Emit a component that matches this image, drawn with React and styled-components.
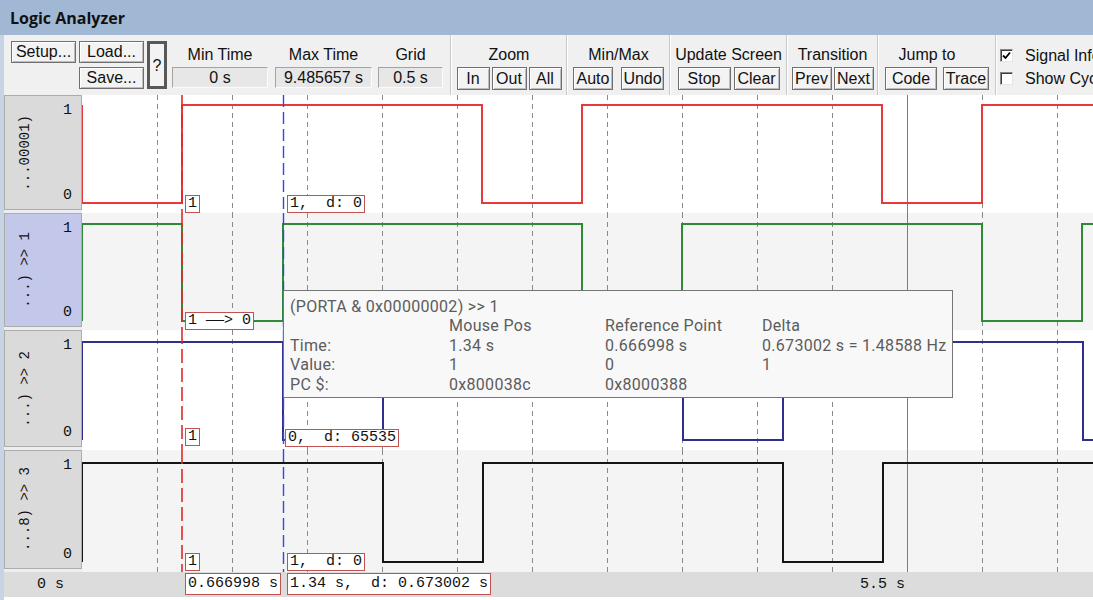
import React from "react";
import styled, { createGlobalStyle } from "styled-components";

const MONO = `"Liberation Mono", "DejaVu Sans Mono", monospace`;
const UI = `"Liberation Sans", Arial, sans-serif`;
const SOFT = `"Open Sans", "Noto Sans", sans-serif`;
const TIP = `Roboto, "Liberation Sans", sans-serif`;

const GlobalStyle = createGlobalStyle`
  html, body { margin: 0; padding: 0; background: #fff; overflow: hidden; }
  #root { width: 1093px; height: 600px; overflow: hidden; }
`;

const Window = styled.div`
  width: 1093px;
  height: 600px;
  display: flex;
  flex-direction: column;
  overflow: hidden;
  background: #fff;
`;

const TitleBar = styled.div`
  height: 35px;
  flex: none;
  background: #a1b8d4;
  display: flex;
  align-items: center;
  padding-left: 10px;
  font-family: ${SOFT};
  font-weight: 700;
  font-size: 16px;
  color: #111;
`;

const Body = styled.div`
  flex: 1;
  min-height: 0;
  display: flex;
  flex-direction: column;
  border-left: 4px solid #c7d4e5;
`;

const Toolbar = styled.div`
  height: 60px;
  flex: none;
  display: flex;
  align-items: stretch;
  background: #f0f0f0;
  padding-left: 7px;
  font-family: ${UI};
  font-size: 16px;
  color: #111;
  white-space: nowrap;
`;

const FileGrid = styled.div`
  display: grid;
  grid-template-columns: 65px 65px 20px;
  grid-template-rows: 22px 22px;
  column-gap: 3px;
  row-gap: 4px;
  padding-top: 6px;
`;

const Btn = styled.div`
  box-sizing: border-box;
  width: ${(p) => (p.$w ? `${p.$w}px` : "auto")};
  height: ${(p) => (p.$h ? `${p.$h}px` : "23px")};
  grid-column: ${(p) => p.$col || "auto"};
  grid-row: ${(p) => p.$row || "auto"};
  border: 1px solid #6f6f6f;
  box-shadow: inset 1px 1px 0 #fff, inset -1px -1px 0 #bdbdbd;
  background: #f3f3f3;
  display: flex;
  align-items: center;
  justify-content: center;
  font-family: ${UI};
  font-size: 16px;
  color: #111;
`;

const HelpBtn = styled(Btn)`
  height: auto;
  border: 3px solid #585858;
  box-shadow: none;
  padding-top: 2px;
`;

const Group = styled.div`
  width: ${(p) => p.$w}px;
  margin-left: ${(p) => p.$ml || 0}px;
  flex: none;
  display: flex;
  flex-direction: column;
  align-items: center;
  padding-top: 9px;
  gap: 1px;
`;

const GroupLabel = styled.div`
  height: 22px;
  line-height: 22px;
  text-align: center;
  padding-right: ${(p) => p.$shift || 0}px;
`;

const FieldBox = styled.div`
  width: 100%;
  height: 21px;
  box-sizing: border-box;
  background: #e7e7e7;
  border: 1px solid;
  border-color: #a3a3a3 #fbfbfb #fbfbfb #a3a3a3;
  display: flex;
  align-items: center;
  justify-content: center;
`;

const BtnRow = styled.div`
  display: flex;
  gap: ${(p) => p.$gap || 2}px;
  justify-content: center;
`;

const Sep = styled.div`
  width: 2px;
  flex: none;
  margin-left: ${(p) => p.$ml || 0}px;
  background: linear-gradient(to right, #c8c8c8 1px, #ffffff 1px);
`;

const Checks = styled.div`
  display: flex;
  flex-direction: column;
  gap: 10px;
  padding: 14px 0 0 3px;
`;

const CheckRow = styled.label`
  display: flex;
  align-items: center;
  gap: 12px;
  height: 13px;
`;

const CheckBox = styled.span`
  width: 13px;
  height: 13px;
  box-sizing: border-box;
  flex: none;
  background: #fff;
  border: 1px solid;
  border-color: #858585 #e4e4e4 #e4e4e4 #858585;
  box-shadow: inset 1px 1px 0 #3e3e3e;
  display: flex;
  align-items: center;
  justify-content: center;
`;

const Tracks = styled.div`
  position: relative;
  display: flex;
  flex-direction: column;
  flex: none;
`;

const Row = styled.div`
  display: flex;
  height: ${(p) => p.$h}px;
`;

const LabelCell = styled.div`
  width: 78px;
  flex: none;
  box-sizing: border-box;
  display: flex;
  background: ${(p) => (p.$sel ? "#c3c7e9" : "#dadada")};
  border-bottom: 3px solid #eceef1;
  box-shadow: inset 0 0 0 1px #acacac;
  font-family: ${MONO};
  color: #111;
`;

const SignalName = styled.div`
  writing-mode: vertical-rl;
  transform: rotate(180deg);
  align-self: center;
  margin-left: 13px;
  font-size: 14px;
  line-height: 16px;
  white-space: pre;
`;

const Levels = styled.div`
  margin-left: auto;
  padding: 8px 10px 6px 0;
  display: flex;
  flex-direction: column;
  justify-content: space-between;
  font-size: 15px;
  line-height: 16px;
`;

const Trace = styled.div`
  flex: 1;
  position: relative;
  background: ${(p) => (p.$alt ? "#f4f4f4" : "#ffffff")};
`;

const Plot = styled.svg`
  display: block;
  width: 100%;
  height: 100%;
`;

const Marker = styled.div`
  position: absolute;
  left: ${(p) => p.$x}px;
  bottom: ${(p) => p.$b || 0}px;
  height: 18px;
  box-sizing: border-box;
  padding: 0 2px;
  background: #fff;
  border: 1px solid #c2524f;
  font-family: ${MONO};
  font-size: 15px;
  line-height: 16px;
  color: #111;
  white-space: pre;
`;

const LongDash = styled.span`
  display: inline-block;
  width: 2ch;
  transform: scaleX(2);
  transform-origin: left center;
`;

const AxisRow = styled.div`
  height: 25px;
  flex: none;
  display: flex;
  background: #dcdcdc;
  font-family: ${MONO};
  font-size: 15px;
  color: #111;
`;

const AxisStart = styled.div`
  width: 78px;
  flex: none;
  box-sizing: border-box;
  padding-left: 33px;
  line-height: 25px;
  white-space: pre;
`;

const AxisTrack = styled.div`
  flex: 1;
  position: relative;
`;

const AxisBox = styled.div`
  position: absolute;
  left: ${(p) => p.$x}px;
  top: 1px;
  height: 22px;
  box-sizing: border-box;
  padding: 0 2px;
  background: #fff;
  border: 1px solid #c2524f;
  line-height: 20px;
  white-space: pre;
`;

const AxisTick = styled.div`
  position: absolute;
  right: ${(p) => p.$r}px;
  top: 0;
  line-height: 25px;
  white-space: pre;
`;

const Tooltip = styled.div`
  position: absolute;
  left: 279px;
  top: 195px;
  width: 670px;
  height: 108px;
  box-sizing: border-box;
  background: #f8f8f8;
  border: 1px solid #767676;
  padding: 6px 0 0 6px;
  display: grid;
  grid-template-columns: 159px 156px 157px 1fr;
  grid-auto-rows: 19.4px;
  font-family: ${TIP};
  font-size: 16px;
  letter-spacing: 0.3px;
  line-height: 19.4px;
  color: #5c5c5c;
  white-space: nowrap;
`;

const TipTitle = styled.div`
  grid-column: 1 / -1;
`;

const PX = 150; // pixels per second
const W = 1011;
const RED_T = 0.666998;
const BLUE_T = 1.34;
const redX = Math.round(RED_T * PX);
const blueX = Math.round(BLUE_T * PX);

const ROWS = [
  {
    name: "...00001)",
    h: 118,
    color: "#e5393b",
    d: "M0,10 V108 H100 V10 H400 V108 H500 V10 H800 V108 H900 V10 H1011",
    markers: [
      { x: redX + 3, text: "1", b: 0 },
      { x: blueX + 4, text: "1,  d: 0", b: 0 },
    ],
  },
  {
    name: "...) >> 1",
    h: 117,
    alt: true,
    sel: true,
    color: "#2f8c35",
    d: "M0,108 V11 H100 V108 H201 V11 H500 V108 H600 V11 H900 V108 H1000 V11 H1011",
    markers: [
      {
        x: redX + 3,
        text: (
          <>
            1 <LongDash>—</LongDash>&gt; 0
          </>
        ),
        b: 0,
      },
    ],
  },
  {
    name: "...) >> 2",
    h: 120,
    color: "#302f8e",
    d: "M0,110 V12 H201 V110 H301 V12 H601 V110 H701 V12 H1001 V110 H1011",
    markers: [
      { x: redX + 3, text: "1", b: 4 },
      { x: blueX + 2, text: "0,  d: 65535", b: 3 },
    ],
  },
  {
    name: "...8) >> 3",
    h: 122,
    alt: true,
    color: "#151515",
    d: "M0,112 V13 H301 V112 H401 V13 H701 V112 H801 V13 H1011",
    markers: [
      { x: redX + 3, text: "1", b: 1 },
      { x: blueX + 4, text: "1,  d: 0", b: 1 },
    ],
  },
];

function TracePlot({ h, color, d }) {
  const grid = [];
  for (let k = 1; k <= 13; k++) {
    const x = k * 75 + 0.5;
    if (k === 11) {
      grid.push(<line key={k} x1={x} y1={0} x2={x} y2={h} stroke="#7d7d7d" strokeWidth="1" />);
    } else {
      grid.push(
        <line key={k} x1={x} y1={0} x2={x} y2={h} stroke="#8a8a8a" strokeWidth="1" strokeDasharray="5 4" />
      );
    }
  }
  return (
    <Plot viewBox={`0 0 ${W} ${h}`} preserveAspectRatio="none">
      {grid}
      <path d={d} fill="none" stroke={color} strokeWidth="2" shapeRendering="crispEdges" />
      <line x1={redX} y1={0} x2={redX} y2={h} stroke="#e12a2a" strokeWidth="1.6" strokeDasharray="14 5" />
      <line x1={blueX + 0.5} y1={0} x2={blueX + 0.5} y2={h} stroke="#3347e6" strokeWidth="1.4" strokeDasharray="12 5" />
    </Plot>
  );
}

function Check({ checked, children }) {
  return (
    <CheckRow>
      <CheckBox>
        {checked && (
          <svg width="9" height="9" viewBox="0 0 9 9">
            <path d="M1 4.5 L3.5 7 L8 1.5" fill="none" stroke="#000" strokeWidth="1.8" />
          </svg>
        )}
      </CheckBox>
      {children}
    </CheckRow>
  );
}

export default function App() {
  return (
    <>
      <GlobalStyle />
      <Window>
        <TitleBar>Logic Analyzer</TitleBar>
        <Body>
          <Toolbar>
            <FileGrid>
              <Btn $col="1" $row="1" $h={22}>Setup...</Btn>
              <Btn $col="2" $row="1" $h={22}>Load...</Btn>
              <Btn $col="2" $row="2" $h={22}>Save...</Btn>
              <HelpBtn $col="3" $row="1 / 3">?</HelpBtn>
            </FileGrid>
            <Group $w={96} $ml={5}>
              <GroupLabel>Min Time</GroupLabel>
              <FieldBox>0 s</FieldBox>
            </Group>
            <Group $w={97} $ml={7}>
              <GroupLabel>Max Time</GroupLabel>
              <FieldBox>9.485657 s</FieldBox>
            </Group>
            <Group $w={65} $ml={6}>
              <GroupLabel>Grid</GroupLabel>
              <FieldBox>0.5 s</FieldBox>
            </Group>
            <Sep $ml={7} />
            <Group $w={114}>
              <GroupLabel>Zoom</GroupLabel>
              <BtnRow>
                <Btn $w={33}>In</Btn>
                <Btn $w={35}>Out</Btn>
                <Btn $w={33}>All</Btn>
              </BtnRow>
            </Group>
            <Sep />
            <Group $w={101}>
              <GroupLabel>Min/Max</GroupLabel>
              <BtnRow $gap={8}>
                <Btn $w={40}>Auto</Btn>
                <Btn $w={43}>Undo</Btn>
              </BtnRow>
            </Group>
            <Sep />
            <Group $w={115}>
              <GroupLabel>Update Screen</GroupLabel>
              <BtnRow $gap={3}>
                <Btn $w={53}>Stop</Btn>
                <Btn $w={46}>Clear</Btn>
              </BtnRow>
            </Group>
            <Sep />
            <Group $w={89}>
              <GroupLabel>Transition</GroupLabel>
              <BtnRow>
                <Btn $w={40}>Prev</Btn>
                <Btn $w={40}>Next</Btn>
              </BtnRow>
            </Group>
            <Sep />
            <Group $w={116}>
              <GroupLabel $shift={20}>Jump to</GroupLabel>
              <BtnRow $gap={6}>
                <Btn $w={52}>Code</Btn>
                <Btn $w={46}>Trace</Btn>
              </BtnRow>
            </Group>
            <Sep />
            <Checks>
              <Check checked>Signal Info</Check>
              <Check>Show Cycles</Check>
            </Checks>
          </Toolbar>

          <Tracks>
            {ROWS.map((r) => (
              <Row key={r.name} $h={r.h}>
                <LabelCell $sel={r.sel}>
                  <SignalName>{r.name}</SignalName>
                  <Levels>
                    <span>1</span>
                    <span>0</span>
                  </Levels>
                </LabelCell>
                <Trace $alt={r.alt}>
                  <TracePlot h={r.h} color={r.color} d={r.d} />
                  {r.markers.map((m) => (
                    <Marker key={m.x} $x={m.x} $b={m.b}>
                      {m.text}
                    </Marker>
                  ))}
                </Trace>
              </Row>
            ))}
            <Tooltip>
              <TipTitle>(PORTA &amp; 0x00000002) &gt;&gt; 1</TipTitle>
              <span />
              <span>Mouse Pos</span>
              <span>Reference Point</span>
              <span>Delta</span>
              <span>Time:</span>
              <span>1.34 s</span>
              <span>0.666998 s</span>
              <span>0.673002 s = 1.48588 Hz</span>
              <span>Value:</span>
              <span>1</span>
              <span>0</span>
              <span>1</span>
              <span>PC $:</span>
              <span>0x800038c</span>
              <span>0x8000388</span>
              <span />
            </Tooltip>
          </Tracks>

          <AxisRow>
            <AxisStart>0 s</AxisStart>
            <AxisTrack>
              <AxisBox $x={redX + 3}>0.666998 s</AxisBox>
              <AxisBox $x={blueX + 4}>1.34 s,  d: 0.673002 s</AxisBox>
              <AxisTick $r={W - 823}>5.5 s</AxisTick>
            </AxisTrack>
          </AxisRow>
        </Body>
      </Window>
    </>
  );
}
